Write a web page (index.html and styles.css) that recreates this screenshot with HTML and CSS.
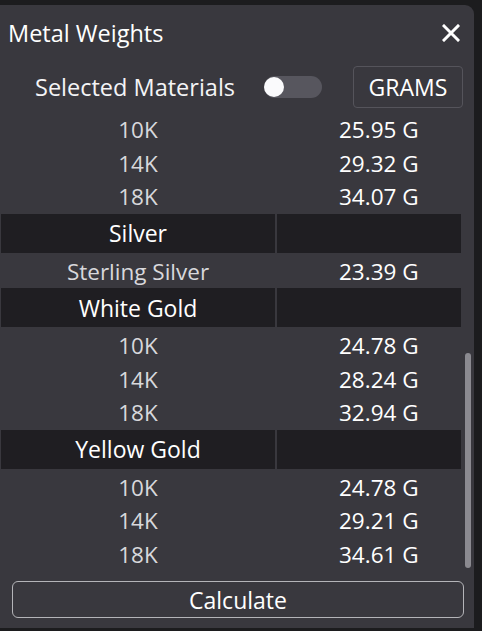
FILE: index.html
```html
<!DOCTYPE html>
<html>
<head>
<meta charset="utf-8">
<link rel="stylesheet" href="styles.css">
</head>
<body>
<div class="panel">
  <div class="titlebar">
    <span class="title">Metal Weights</span>
    <svg class="close" width="18" height="18" viewBox="0 0 18 18"><path d="M2 2 L16 16 M16 2 L2 16" stroke="#fff" stroke-width="3" stroke-linecap="square"/></svg>
  </div>
  <div class="toolbar">
    <span class="tool-label">Selected Materials</span>
    <span class="toggle"><span class="knob"></span></span>
    <span class="units">GRAMS</span>
  </div>
  <div class="listarea">
    <div class="list">
      <div class="row"><span class="name">10K</span><span class="val">25.95 G</span></div>
      <div class="row"><span class="name">14K</span><span class="val">29.32 G</span></div>
      <div class="row"><span class="name">18K</span><span class="val">34.07 G</span></div>
      <div class="group"><span class="gname">Silver</span><span class="gval"></span></div>
      <div class="row"><span class="name">Sterling Silver</span><span class="val">23.39 G</span></div>
      <div class="group"><span class="gname">White Gold</span><span class="gval"></span></div>
      <div class="row"><span class="name">10K</span><span class="val">24.78 G</span></div>
      <div class="row"><span class="name">14K</span><span class="val">28.24 G</span></div>
      <div class="row"><span class="name">18K</span><span class="val">32.94 G</span></div>
      <div class="group"><span class="gname">Yellow Gold</span><span class="gval"></span></div>
      <div class="row"><span class="name">10K</span><span class="val">24.78 G</span></div>
      <div class="row"><span class="name">14K</span><span class="val">29.21 G</span></div>
      <div class="row"><span class="name">18K</span><span class="val">34.61 G</span></div>
    </div>
    <div class="track"><div class="thumb"></div></div>
  </div>
  <div class="footer">
    <div class="calc">Calculate</div>
  </div>
</div>
</body>
</html>
```

FILE: styles.css
```css
html, body {
  margin: 0;
  padding: 0;
  background: #1c1c1e;
  width: 482px;
  height: 631px;
  overflow: hidden;
  font-family: "Open Sans", "Noto Sans", sans-serif;
}
.panel {
  margin-top: 5px;
  width: 474px;
  height: 623px;
  background: #39383e;
  border-top-right-radius: 9px;
  display: flex;
  flex-direction: column;
  color: #fff;
}
.titlebar {
  height: 55px;
  display: flex;
  align-items: center;
  justify-content: space-between;
  padding: 0 14px 0 8px;
}
.title {
  font-size: 23.5px;
  color: #fff;
}
.close {
  display: block;
}
.toolbar {
  height: 53px;
  display: flex;
  align-items: center;
  padding-left: 35px;
}
.tool-label {
  font-size: 23.5px;
  color: #f4f4f6;
  width: 229px;
}
.toggle {
  width: 58px;
  height: 22px;
  border-radius: 11px;
  background: #57565e;
  display: flex;
  align-items: center;
}
.knob {
  width: 20px;
  height: 20px;
  border-radius: 50%;
  background: #fafafc;
}
.units {
  margin-left: 31px;
  width: 108px;
  height: 40px;
  border: 1px solid #55545b;
  border-radius: 4px;
  display: flex;
  align-items: center;
  justify-content: center;
  font-size: 23px;
  color: #fff;
}
.listarea {
  display: flex;
  height: 465px;
}
.list {
  width: 461px;
  display: flex;
  flex-direction: column;
}
.row {
  height: 33.5px;
  display: grid;
  grid-template-columns: 276px 185px;
  align-items: center;
  flex-shrink: 0;
}
.name {
  text-align: center;
  font-size: 22.5px;
  color: #d8d8dc;
}
.val {
  padding-left: 63px;
  font-size: 22.5px;
  color: #fff;
}
.group {
  height: 39px;
  display: grid;
  grid-template-columns: 274px 184px;
  column-gap: 2px;
  margin: 0 0 2px 1px;
  flex-shrink: 0;
}
.gname {
  background: #1f1e22;
  display: flex;
  align-items: center;
  justify-content: center;
  font-size: 23px;
  color: #fff;
}
.gval {
  background: #1f1e22;
}
.track {
  width: 13px;
  display: flex;
  justify-content: center;
  align-items: flex-start;
  padding-top: 240px;
}
.thumb {
  width: 6px;
  height: 215px;
  border-radius: 3px;
  background: #8b8a90;
}
.footer {
  padding: 3px 10px 0 12px;
}
.calc {
  height: 35px;
  border: 1.5px solid #b4b4b8;
  border-radius: 6px;
  display: flex;
  align-items: center;
  justify-content: center;
  font-size: 23px;
  color: #fff;
}
```
